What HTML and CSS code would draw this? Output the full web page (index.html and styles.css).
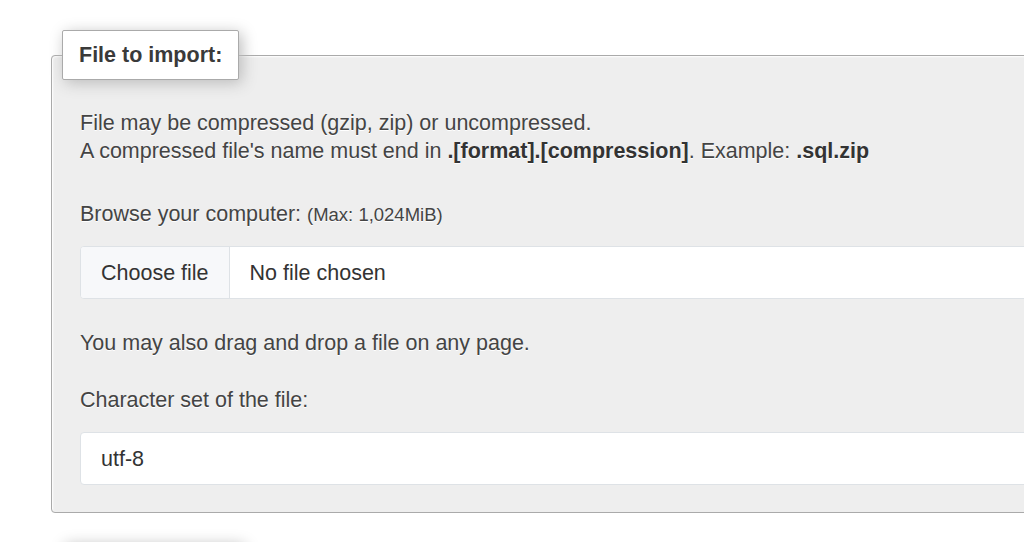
FILE: index.html
```html
<!DOCTYPE html>
<html lang="en">
<head>
    <meta charset="UTF-8">
    <title>Import</title>
    <meta name="viewport" content="width=device-width, initial-scale=1.0">
    <link rel="stylesheet" href="styles.css">
</head>
<body>
    <div class="page">
        <fieldset class="box">
            <legend>File to import:</legend>
            <div class="box-body">
                <p class="note">
                    File may be compressed (gzip, zip) or uncompressed.<br>
                    A compressed file's name must end in <b>.[format].[compression]</b>. Example: <b>.sql.zip</b>
                </p>
                <div class="label">Browse your computer: <small>(Max: 1,024MiB)</small></div>
                <div class="file-input">
                    <span class="file-btn">Choose file</span>
                    <span class="file-name">No file chosen</span>
                </div>
                <p class="hint">You may also drag and drop a file on any page.</p>
                <div class="label">Character set of the file:</div>
                <div class="select">utf-8</div>
            </div>
        </fieldset>

        <!-- next section, only its legend edge is in view -->
        <fieldset class="box next">
            <legend class="empty"></legend>
        </fieldset>
    </div>
</body>
</html>
```

FILE: styles.css
```css
html, body {
    margin: 0;
    padding: 0;
    overflow: hidden;
    background-color: #ffffff;
}
body {
    font-family: "Liberation Sans", Arial, Helvetica, sans-serif;
    font-size: 21.5px;
    line-height: 28px;
    color: #444;
}
.page {
    width: 1500px;
    padding: 30px 0 0 51px;
}
.box {
    margin: 0;
    padding: 0;
    border: 1px solid #aaa;
    border-radius: 4px;
    background-color: #eee;
    box-shadow: 1px 1px 2px #fff inset;
    text-shadow: 0 1px 0 #fff;
}
.box legend {
    margin-left: 10px;
    padding: 11px 16px;
    font-weight: bold;
    line-height: 26px;
    color: #3a3a3a;
    background-color: #fff;
    border: 1px solid #aaa;
    border-radius: 2px;
    box-shadow: 3px 3px 15px #bbb;
    text-shadow: none;
}
.box legend.empty {
    width: 146px;
    height: 26px;
}
.box.next {
    margin-top: 29px;
    height: 80px;
}
.box-body {
    padding: 29px 0 27px 28px;
}
.box-body p {
    margin: 0;
}
.note {
    margin-bottom: 35px !important;
}
.note b {
    color: #333;
}
.label small {
    font-size: 0.86em;
}
.file-input {
    display: flex;
    height: 51px;
    margin: 17px 0 30px;
    border: 1px solid #dee2e6;
    border-radius: 4px;
    background-color: #fff;
    text-shadow: none;
    overflow: hidden;
}
.file-btn {
    display: flex;
    align-items: center;
    padding: 0 20px;
    background-color: #f7f8fa;
    border-right: 1px solid #dee2e6;
    color: #333;
}
.file-name {
    display: flex;
    align-items: center;
    padding: 0 20px;
    color: #333;
}
.hint {
    margin-bottom: 29px !important;
}
.select {
    display: flex;
    align-items: center;
    height: 51px;
    margin-top: 18px;
    padding: 0 20px;
    border: 1px solid #dee2e6;
    border-radius: 4px;
    background-color: #fff;
    color: #333;
    text-shadow: none;
}
```
